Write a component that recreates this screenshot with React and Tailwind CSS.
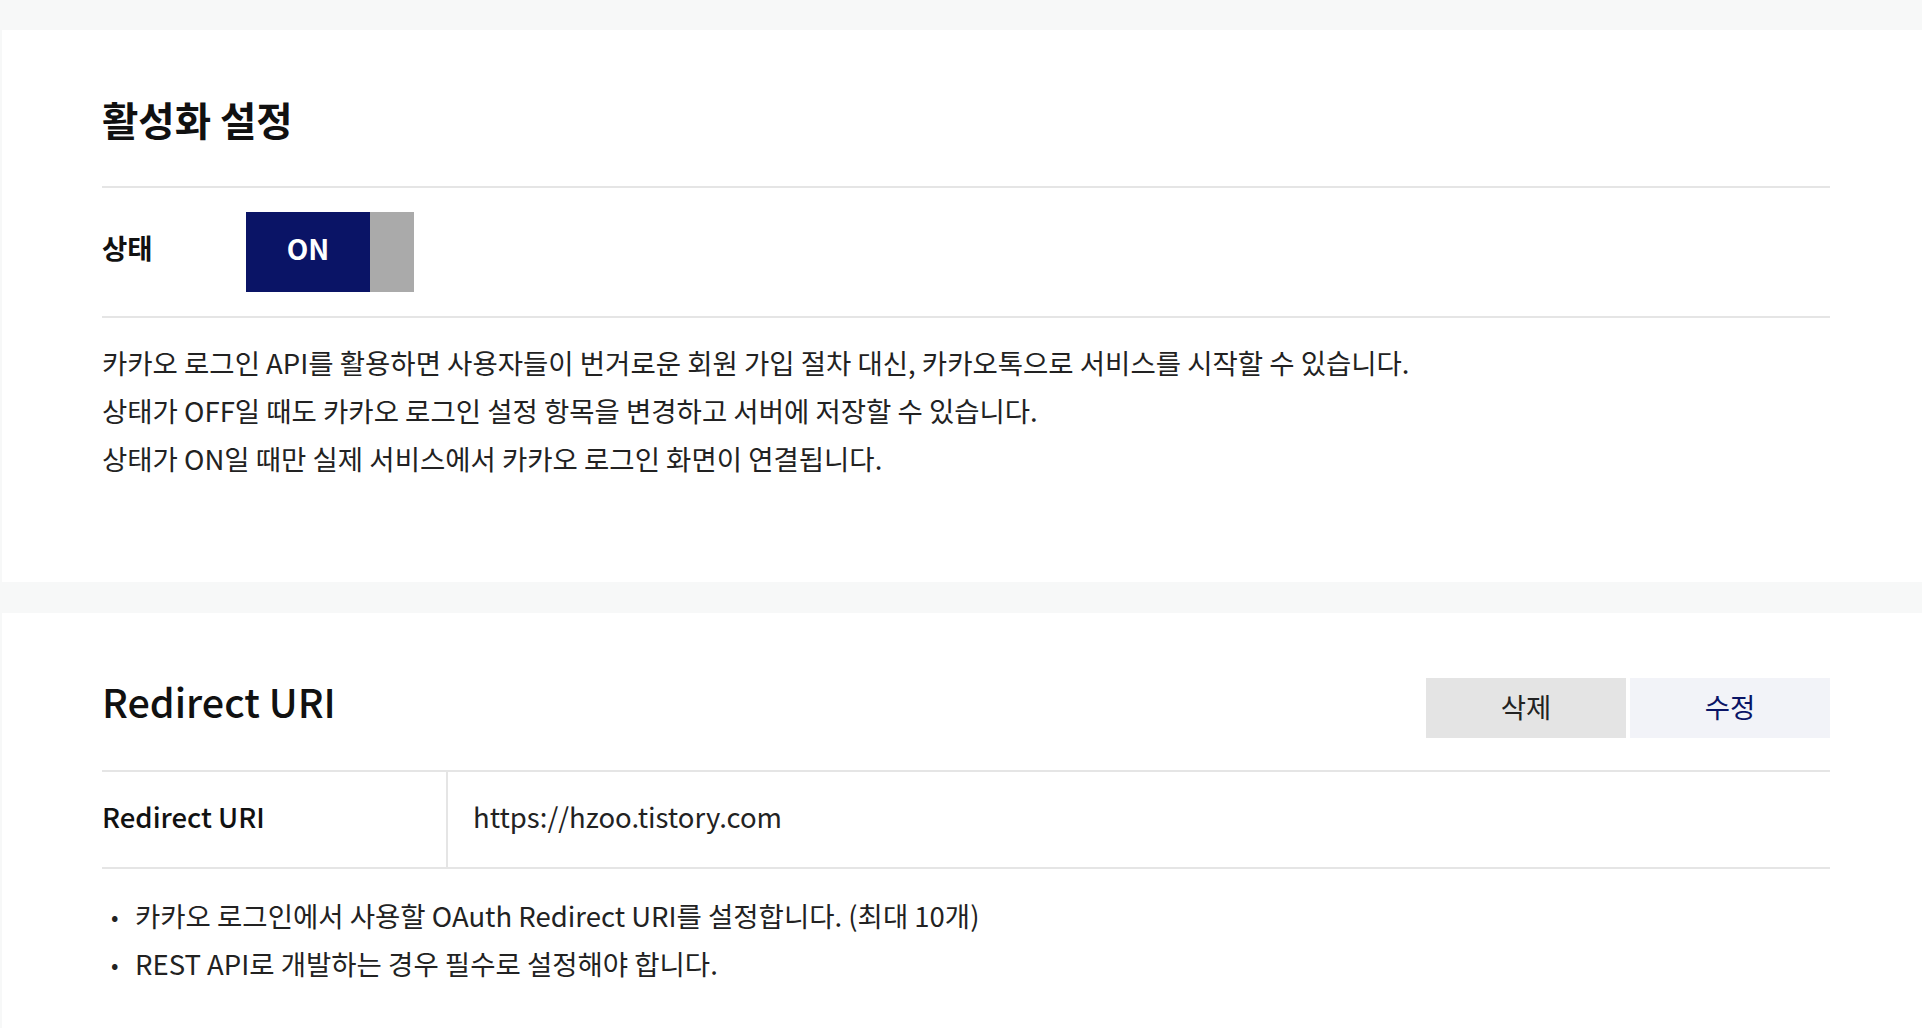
import { useState } from "react";

const FONT = "font-['Noto_Sans_CJK_KR','Noto_Sans',sans-serif]";

function Toggle({ on, onChange }) {
  return (
    <button
      type="button"
      onClick={() => onChange(!on)}
      className="flex h-[80px] w-[168px]"
    >
      <span className="flex h-full w-[124px] items-center justify-center bg-[#0a1466] pb-[8px] text-[28px] font-bold text-white">
        {on ? "ON" : "OFF"}
      </span>
      <span className="h-full w-[44px] bg-[#aaaaaa]" />
    </button>
  );
}

export default function App() {
  const [active, setActive] = useState(true);

  return (
    <div className={`min-h-screen bg-[#f7f8f8] pt-[30px] pl-[2px] ${FONT} text-[#222]`}>
      {/* 활성화 설정 */}
      <section className="bg-white pl-[100px] pr-[92px] pt-[69px] pb-[100px]">
        <h2 className="text-[39.5px] leading-[40px] font-bold text-[#111]">활성화 설정</h2>
        <div className="mt-[47px] flex items-center border-y-2 border-[#e5e5e5] py-[24px]">
          <div className="flex h-[80px] w-[144px] items-center pb-[8px] text-[27.5px] font-bold text-[#111]">상태</div>
          <Toggle on={active} onChange={setActive} />
        </div>
        <div className="mt-[20px] text-[27.5px] leading-[48px]">
          <p>카카오 로그인 API를 활용하면 사용자들이 번거로운 회원 가입 절차 대신, 카카오톡으로 서비스를 시작할 수 있습니다.</p>
          <p>상태가 OFF일 때도 카카오 로그인 설정 항목을 변경하고 서버에 저장할 수 있습니다.</p>
          <p>상태가 ON일 때만 실제 서비스에서 카카오 로그인 화면이 연결됩니다.</p>
        </div>
      </section>

      {/* Redirect URI */}
      <section className="mt-[31px] bg-white pl-[100px] pr-[92px] pt-[65px] pb-[60px]">
        <div className="flex items-center justify-between">
          <h2 className="pb-[14px] text-[39.5px] leading-[40px] font-medium text-[#111]">Redirect URI</h2>
          <div className="flex gap-[4px]">
            <button className="h-[60px] w-[200px] bg-[#e4e4e4] pb-[2px] text-[27.5px] text-[#222]">삭제</button>
            <button className="h-[60px] w-[200px] bg-[#f2f3f8] pb-[2px] text-[27.5px] text-[#0a1466]">수정</button>
          </div>
        </div>
        <div className="mt-[32px] flex border-y-2 border-[#e5e5e5]">
          <div className="flex h-[95px] w-[346px] items-center border-r-2 border-[#e5e5e5] pb-[6px] text-[27.5px] font-medium text-[#111]">
            Redirect URI
          </div>
          <div className="flex items-center pb-[6px] pl-[25px] text-[27.5px]">https://hzoo.tistory.com</div>
        </div>
        <ul className="mt-[22px] text-[27.5px] leading-[48px]">
          <li className="flex">
            <span className="w-[33px] pl-[9px] text-[22px]">•</span>
            카카오 로그인에서 사용할 OAuth Redirect URI를 설정합니다. (최대 10개)
          </li>
          <li className="flex">
            <span className="w-[33px] pl-[9px] text-[22px]">•</span>
            REST API로 개발하는 경우 필수로 설정해야 합니다.
          </li>
        </ul>
      </section>
    </div>
  );
}
